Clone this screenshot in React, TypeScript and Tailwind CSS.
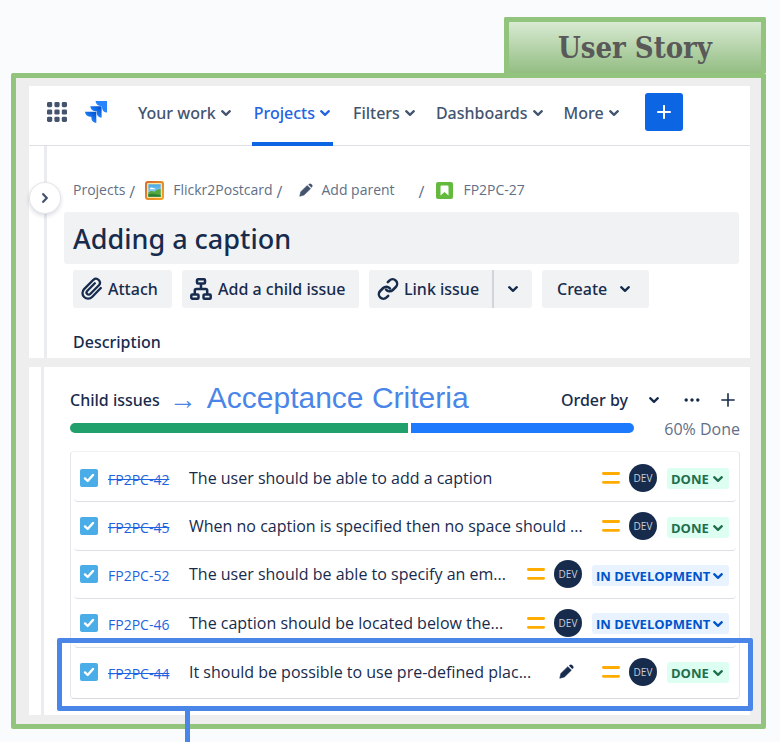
import React from "react";

type IconProps = { className?: string };

function Chevron({ className = "" }: IconProps) {
  return (
    <svg viewBox="0 0 12 12" className={`h-3 w-3 shrink-0 ${className}`} fill="none" stroke="currentColor" strokeWidth="2.3" strokeLinecap="round" strokeLinejoin="round" aria-hidden="true">
      <path d="M2.2 4.2 6 7.8l3.8-3.6" />
    </svg>
  );
}

function AppSwitcher() {
  const stops = [0, 7.4, 14.8];
  return (
    <svg viewBox="0 0 20 20" className="h-5 w-5" fill="#44546f" aria-hidden="true">
      {stops.map((y) => stops.map((x) => <rect key={`${x}-${y}`} x={x} y={y} width="5.2" height="5.2" rx="1.4" />))}
    </svg>
  );
}

function JiraLogo() {
  return (
    <svg viewBox="0 0 22 22" className="h-[22px] w-[22px]" aria-hidden="true">
      <defs>
        <linearGradient id="jira-mid" x1="1" y1="0" x2="0.4" y2="0.7">
          <stop offset="0.1" stopColor="#0052cc" />
          <stop offset="1" stopColor="#2684ff" />
        </linearGradient>
      </defs>
      <path d="M10.6 0H22v11.6a5 5 0 0 1-5-5V5h-1.6a5 5 0 0 1-4.800-5Z" fill="#2684ff" />
      <path d="M5.3 5.300h11.300v11.500a5 5 0 0 1-4.900-5v-1.600h-1.500a5 5 0 0 1-4.900-4.900Z" fill="url(#jira-mid)" />
      <path d="M0 10.800h11.300v11.200a5 5 0 0 1-4.900-5v-1.300H4.900A5 5 0 0 1 0 10.800Z" fill="url(#jira-mid)" />
    </svg>
  );
}

function Pencil({ className = "" }: IconProps) {
  return (
    <svg viewBox="0 0 16 16" className={`shrink-0 ${className}`} fill="currentColor" aria-hidden="true">
      <path d="M9.400 2.800 13.200 6.600l-7.400 7.200L.8 15.200l1.200-5.200Z" stroke="currentColor" strokeWidth=".6" strokeLinejoin="round" />
      <path d="m10.600 1.800.7-.7c.8-.8 1.900-.8 2.700 0l.9.900c.8.800.8 1.900 0 2.700l-.7.700Z" />
    </svg>
  );
}

function ProjectAvatar() {
  return (
    <svg viewBox="0 0 19 19" className="h-[19px] w-[19px] shrink-0" aria-hidden="true">
      <defs>
        <linearGradient id="frame" x1="0" y1="0" x2="1" y2="1">
          <stop offset="0" stopColor="#d46a2c" />
          <stop offset="1" stopColor="#f6a623" />
        </linearGradient>
        <linearGradient id="sky" x1="0" y1="0" x2="0" y2="1">
          <stop offset="0" stopColor="#45a7e6" />
          <stop offset="1" stopColor="#b5e2f7" />
        </linearGradient>
      </defs>
      <rect width="19" height="19" rx="3" fill="url(#frame)" />
      <rect x="2" y="2" width="15" height="15" rx="1" fill="#fbe3a4" />
      <rect x="3.300" y="3.300" width="12.400" height="12.400" fill="url(#sky)" />
      <path d="M3.300 11.500c2-2 4-2 6-.8 2.200-2.200 4.400-2.600 6.400-2.400v7.400H3.300Z" fill="#56a83c" />
      <path d="M5 7.600c1-1.500 2.500-1.300 3.200-.3 1.200-.4 2 .2 2.200 1H5Z" fill="#fff" />
      <path d="M3.300 13.500c3-1.500 6-.5 12.400.5v1.700H3.300Z" fill="#2f8136" />
    </svg>
  );
}

function StoryIcon() {
  return (
    <svg viewBox="0 0 17 17" className="h-[17px] w-[17px] shrink-0" aria-hidden="true">
      <rect width="17" height="17" rx="2" fill="#63ba3c" />
      <path d="M4.500 4.500a1 1 0 0 1 1-1h6a1 1 0 0 1 1 1v9L8.500 10l-4 3.500Z" fill="#fff" />
    </svg>
  );
}

function Paperclip() {
  return (
    <svg viewBox="0 0 24 24" className="h-6 w-6 shrink-0" fill="none" stroke="currentColor" strokeWidth="2.300" strokeLinecap="round" strokeLinejoin="round" aria-hidden="true">
      <path d="m20.800 11-8.700 9a5.600 5.600 0 0 1-8-7.900l9.300-9.300a3.900 3.900 0 0 1 5.500 5.500l-8.700 8.700a2.100 2.100 0 0 1-3-3l7.600-7.700" />
    </svg>
  );
}

function Hierarchy() {
  return (
    <svg viewBox="0 0 22 22" className="h-[22px] w-[22px] shrink-0" fill="none" stroke="currentColor" strokeWidth="2.500" strokeLinejoin="round" aria-hidden="true">
      <rect x="7" y="1.300" width="8" height="4.200" rx="1" />
      <rect x="1.300" y="16.500" width="7.200" height="4.200" rx="1" />
      <rect x="13.500" y="16.500" width="7.200" height="4.200" rx="1" />
      <path d="M11 6v5M4.800 16v-3.500a1.500 1.500 0 0 1 1.500-1.500h9.400a1.500 1.500 0 0 1 1.500 1.500V16" />
    </svg>
  );
}

function LinkIcon() {
  return (
    <svg viewBox="0 0 24 24" className="h-6 w-6 shrink-0" fill="none" stroke="currentColor" strokeWidth="2.500" strokeLinecap="round" strokeLinejoin="round" aria-hidden="true">
      <path d="M10 12.500a4.500 4.500 0 0 0 6.800.5l3-3a4.500 4.500 0 0 0-6.400-6.400L11.800 5.200" />
      <path d="M14 11.500a4.500 4.500 0 0 0-6.800-.5l-3 3a4.500 4.500 0 0 0 6.400 6.400l1.600-1.600" />
    </svg>
  );
}

function Plus({ thin = false }: { thin?: boolean }) {
  return (
    <svg viewBox="0 0 14 14" className="h-[14px] w-[14px] shrink-0" fill="none" stroke="currentColor" strokeWidth={thin ? 1.6 : 2} strokeLinecap="round" aria-hidden="true">
      <path d="M7 .9v12.200M.9 7h12.200" />
    </svg>
  );
}

function NavItem({ label, active = false }: { label: string; active?: boolean }) {
  return (
    <button
      type="button"
      className={`flex h-full items-center gap-1 border-b-4 pb-[2px] ${
        active ? "border-[#0c66e4] px-[2px] text-[#2563e0]" : "border-transparent text-[#44546f]"
      }`}
    >
      {label}
      <Chevron />
    </button>
  );
}

function TopNav() {
  return (
    <header className="border-b border-[#dcdfe4] pl-[18px]">
      <nav aria-label="Main" className="-mb-px flex h-[60px] items-center font-['Noto_Sans',sans-serif] text-base font-medium">
        <button type="button" aria-label="Switch to" className="mb-2">
          <AppSwitcher />
        </button>
        <a href="#home" aria-label="Jira home" className="mr-[31px] ml-[18px] mb-2">
          <JiraLogo />
        </a>
        <div className="flex h-full gap-[20px]">
          <NavItem label="Your work" />
          <NavItem label="Projects" active />
          <NavItem label="Filters" />
          <NavItem label="Dashboards" />
          <NavItem label="More" />
        </div>
        <button type="button" aria-label="Create" className="mb-2 ml-[25px] grid h-[38px] w-[38px] place-items-center rounded-[3px] bg-[#0c66e4] text-white">
          <Plus />
        </button>
      </nav>
    </header>
  );
}

function Slash() {
  return <span className="pt-1 text-base">/</span>;
}

function Breadcrumbs() {
  return (
    <nav aria-label="Breadcrumbs" className="flex h-5 items-center pl-[9px] text-sm whitespace-nowrap text-[#626f86]">
      <a href="#projects" className="mr-1">Projects</a>
      <Slash />
      <a href="#flickr2postcard" className="mr-1 ml-[10px] flex items-center gap-[9px]">
        <ProjectAvatar />
        Flickr2Postcard
      </a>
      <Slash />
      <button type="button" className="mr-[24px] ml-[17px] flex items-center gap-2">
        <Pencil className="h-[14px] w-[14px] text-[#44546f]" />
        Add parent
      </button>
      <Slash />
      <a href="#FP2PC-27" className="ml-[12px] flex items-center gap-[10px]">
        <StoryIcon />
        FP2PC-27
      </a>
    </nav>
  );
}

function IssueActions() {
  const button = "flex h-full items-center bg-[#f1f2f4]";
  return (
    <div className="mt-[6px] flex h-[38px] gap-[10px] pl-[9px] font-['Noto_Sans',sans-serif] text-base font-medium whitespace-nowrap">
      <button type="button" className={`${button} w-[99px] gap-1 rounded-[3px] pl-[7px]`}>
        <Paperclip />
        Attach
      </button>
      <button type="button" className={`${button} w-[177px] gap-[6px] rounded-[3px] pl-2`}>
        <Hierarchy />
        Add a child issue
      </button>
      <div className="flex">
        <button type="button" className={`${button} w-[123px] gap-1 rounded-l-[3px] pl-[7px]`}>
          <LinkIcon />
          Link issue
        </button>
        <button type="button" aria-label="More link options" className={`${button} w-[40px] justify-center rounded-r-[3px] border-l-2 border-[#d0d4db]`}>
          <Chevron />
        </button>
      </div>
      <button type="button" className={`${button} w-[107px] gap-3 rounded-[3px] pl-[15px]`}>
        Create
        <Chevron />
      </button>
    </div>
  );
}

function IssuePanel() {
  return (
    <section className="bg-white">
      <TopNav />
      <div className="flex">
        <div className="relative w-[18px] shrink-0 border-r-[3px] border-[#ebecf0]">
          <button type="button" aria-label="Expand sidebar" className="absolute top-[37px] left-[1px] grid h-[30px] w-[30px] place-items-center rounded-full bg-white text-[#44546f] shadow-[0_0_0_1px_#e4e6ea,0_2px_4px_1px_#091e4226]">
            <Chevron className="-rotate-90" />
          </button>
        </div>
        <div className="min-w-0 flex-1 pt-[34px] pr-[11px] pb-[6px] pl-[17px]">
          <Breadcrumbs />
          <h1 className="mt-3 h-[52px] rounded-[3px] bg-[#f1f2f4] pl-[9px] font-['Noto_Sans',sans-serif] text-[27px] leading-[54px] font-medium">Adding a caption</h1>
          <IssueActions />
          <h2 className="mt-6 pl-[9px] font-['Noto_Sans',sans-serif] text-base leading-5 font-medium">Description</h2>
        </div>
      </div>
    </section>
  );
}

type Status = "DONE" | "IN DEVELOPMENT";

type Issue = { id: string; summary: string; status: Status; struck: boolean; editing?: boolean };

const issues: Issue[] = [
  { id: "FP2PC-42", summary: "The user should be able to add a caption", status: "DONE", struck: true },
  { id: "FP2PC-45", summary: "When no caption is specified then no space should ...", status: "DONE", struck: true },
  { id: "FP2PC-52", summary: "The user should be able to specify an em...", status: "IN DEVELOPMENT", struck: false },
  { id: "FP2PC-46", summary: "The caption should be located below the...", status: "IN DEVELOPMENT", struck: false },
  { id: "FP2PC-44", summary: "It should be possible to use pre-defined plac...", status: "DONE", struck: true, editing: true },
];

function StatusSelect({ id, status }: { id: string; status: Status }) {
  const done = status === "DONE";
  return (
    <div className={`relative mt-[2px] h-[21px] shrink-0 rounded-[3px] ${done ? "w-[62px] bg-[#dcfff1] text-[#216e4e]" : "w-[137px] bg-[#e9f2ff] text-[#0055cc]"}`}>
      <select aria-label={`Status of ${id}`} defaultValue={status} className="block h-[21px] w-full appearance-none bg-transparent pt-[2px] pl-1 text-[13px] leading-[19px] font-bold">
        <option>DONE</option>
        <option>IN DEVELOPMENT</option>
      </select>
      <Chevron className="pointer-events-none absolute top-[5px] right-[5px]" />
    </div>
  );
}

function IssueRow({ issue, last }: { issue: Issue; last: boolean }) {
  return (
    <li className={`relative mx-[3px] flex items-center pr-[7px] pl-[6px] ${last ? "" : "rounded-b-[4px] border-b border-[#dcdfe4]"}`}>
      <label className="relative block h-[18px] w-[18px] shrink-0">
        <input type="checkbox" defaultChecked aria-label={`Select ${issue.id}`} className="block h-[18px] w-[18px] appearance-none rounded-[2px] bg-[#4bade8]" />
        <svg viewBox="0 0 18 18" className="pointer-events-none absolute inset-0" fill="none" stroke="#fff" strokeWidth="2.400" strokeLinecap="round" strokeLinejoin="round" aria-hidden="true">
          <path d="m5 9.400 2.700 2.600L13 6" />
        </svg>
      </label>
      <a href={`#${issue.id}`} className={`mt-1 ml-[10px] w-[81px] shrink-0 text-sm text-[#1f63e0] ${issue.struck ? "line-through" : ""}`}>
        {issue.id}
      </a>
      <span className="min-w-0 flex-1 text-base whitespace-nowrap">{issue.summary}</span>
      {issue.editing && (
        <button type="button" aria-label="Edit summary" className="mr-[28px]">
          <Pencil className="h-[15px] w-[15px]" />
        </button>
      )}
      <svg viewBox="0 0 18 14" role="img" aria-label="Medium priority" className="mr-[9px] h-[14px] w-[18px] shrink-0" stroke="#ffab00" strokeWidth="2.800" strokeLinecap="round">
        <path d="M1.400 2.500h15.200M1.400 11.300h15.200" />
      </svg>
      <span className="mr-[10px] grid h-[28px] w-[28px] shrink-0 place-items-center rounded-full bg-[#172b4d] text-[10px] leading-none text-[#c8ced8]">DEV</span>
      <StatusSelect id={issue.id} status={issue.status} />
      {last && (
        <div className="pointer-events-none absolute -top-[10px] -right-[17px] -bottom-[15px] -left-[17px] rounded-[2px] border-[5px] border-[#4a86e8]">
          <div className="absolute top-full left-[123px] h-[36px] w-[5px] bg-[#4a86e8]" />
        </div>
      )}
    </li>
  );
}

function ChildIssues() {
  return (
    <section className="mt-[9px] flex bg-white">
      <div className="w-[15px] shrink-0 border-r-[3px] border-[#ebecf0]" />
      <div className="min-w-0 flex-1 pt-[14px] pr-[10px] pb-4 pl-[26px]">
        <div className="flex h-[37px] items-center font-['Noto_Sans',sans-serif] whitespace-nowrap">
          <h2 className="text-base font-medium">Child issues</h2>
          <p className="flex flex-1 items-center gap-[10px] pl-[9px] font-['Liberation_Sans',sans-serif] text-[#4a86e8]">
            <span className="text-[28px] leading-9">→</span>
            <span className="pb-1 text-[30px] leading-8">Acceptance Criteria</span>
          </p>
          <button type="button" className="flex items-center gap-5 text-base font-medium">
            Order by
            <Chevron />
          </button>
          <button type="button" aria-label="More actions" className="ml-[24px]">
            <svg viewBox="0 0 16 4" className="h-1 w-4" fill="currentColor" aria-hidden="true">
              <circle cx="2.200" cy="2" r="1.700" />
              <circle cx="8" cy="2" r="1.700" />
              <circle cx="13.800" cy="2" r="1.700" />
            </svg>
          </button>
          <button type="button" aria-label="Create child issue" className="mr-[5px] ml-[21px]">
            <Plus thin />
          </button>
        </div>
        <div className="flex h-5 items-center">
          <div className="flex h-[10px] flex-1 gap-[3px] overflow-hidden rounded-full">
            <div className="w-3/5 bg-[#22a06b]" />
            <div className="flex-1 bg-[#1d7afc]" />
          </div>
          <span className="w-[106px] pt-[2px] text-right text-base leading-5 text-[#626f86]">60% Done</span>
        </div>
        <ul className="mt-[13px] grid h-[248px] grid-rows-5 rounded-[4px] border border-[#e4e6ea] border-t-[#f1f2f4] border-b-[#d5d9e0] py-[2px]">
          {issues.map((issue, index) => (
            <IssueRow key={issue.id} issue={issue} last={index === issues.length - 1} />
          ))}
        </ul>
      </div>
    </section>
  );
}

export default function App() {
  return (
    <main className="min-h-screen bg-[#fafbfd] pt-[17px] pr-[14px] pl-[11px] font-['Open_Sans',sans-serif] text-[#172b4d]">
      <div className="ml-auto h-14 w-[262px] rounded-t-[2px] border-[5px] border-b-0 border-[#93c47d] bg-linear-to-b from-[#d9ead3] to-[#93bd82] text-center font-['DejaVu_Serif_Condensed','DejaVu_Serif',serif] text-[29px] leading-[52px] font-bold text-[#595959]">
        User Story
      </div>
      <div className="rounded-[2px] border-[5px] border-[#93c47d] bg-[#eeeeee] pt-2 pr-[11px] pb-[9px] pl-[13px]">
        <IssuePanel />
        <ChildIssues />
      </div>
    </main>
  );
}
